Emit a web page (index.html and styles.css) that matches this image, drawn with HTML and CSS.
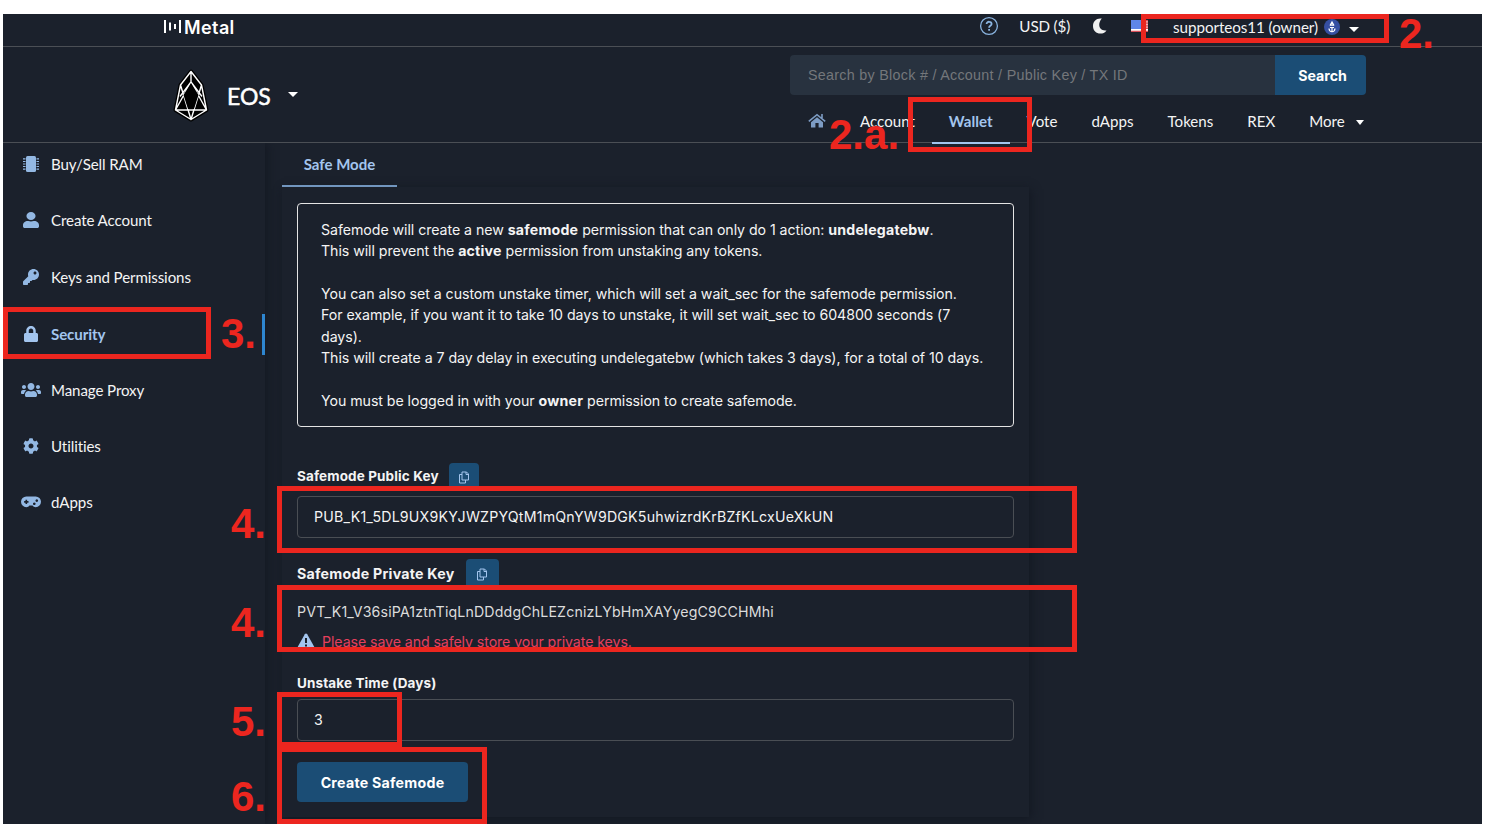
FILE: index.html
```html
<!DOCTYPE html>
<html lang="en">
<head>
    <meta charset="UTF-8">
    <meta name="viewport" content="width=device-width, initial-scale=1.0">
    <title>EOS Wallet - Safe Mode</title>
    <link rel="stylesheet" href="styles.css">
</head>
<body>
    <div class="app">
        <div class="topbar">
            <div class="brand">
                <svg width="20" height="16" viewBox="0 0 20 16" fill="#fff">
                    <rect x="1" y="1" width="2" height="13"/>
                    <rect x="6" y="3.5" width="2" height="8"/>
                    <rect x="11" y="5" width="2" height="5"/>
                    <rect x="16" y="1" width="2" height="13"/>
                </svg>
                <span>Metal</span>
            </div>
            <div class="top-links">
                <svg class="help" width="20" height="20" viewBox="0 0 20 20" fill="none" stroke="#8ab4e0" stroke-width="1.3">
                    <circle cx="10" cy="10" r="8.4"/>
                    <path stroke-width="1.8" d="M7.6 8.1c0-3.2 5-3 5 0 0 1.7-2.5 1.8-2.5 3.6M10.1 13v1.8"/>
                </svg>
                <span class="currency">USD ($)</span>
                <svg class="moon" width="16" height="16" viewBox="0 0 16 16" fill="#f1f1f1">
                    <path d="M9.800.6C4.500-.2 1 3.500 1 8c0 4.600 3.300 7.600 7.300 7.600 2.500 0 4.700-1 6.200-3.200C7.500 13.500 4.800 6.500 9.800.6z"/>
                </svg>
                <svg class="flag" width="17" height="12" viewBox="0 0 17 12">
                    <rect width="17" height="12" fill="#f3b3b3"/>
                    <path stroke="#d9505a" stroke-width="1.2" d="M0 .6h17M0 3.200h17M0 5.800h17M0 8.400h17M0 11.300h17"/>
                    <rect width="11" height="9" fill="#5f86e8"/>
                    <rect y="9" width="17" height="1.500" fill="#fff"/>
                </svg>
                <span class="user">supporteos11 (owner)</span>
                <svg class="anchor" width="16" height="16" viewBox="0 0 16 16" fill="none" stroke="#fff" stroke-width="1.2">
                    <circle cx="8" cy="8" r="8" fill="#3650a2" stroke="none"/>
                    <path d="M6 6.600L8 3l2 3.600M6.300 6.200h3.400M8 8v5M5 9.500c.4 4.300 5.600 4.300 6 0M6 8.500h4"/>
                </svg>
                <span class="caret caret-user"></span>
            </div>
        </div>

        <div class="header">
            <div class="chain">
                <svg width="36" height="54" viewBox="0 0 36 54" stroke-linejoin="round">
                    <path d="M18 2.500L7.500 16 2.500 41 18 50.500 33.500 41 28.500 16z" fill="#000" stroke="#000" stroke-width="4"/>
                    <path d="M18 2.500L7.500 16 2.500 41 18 50.500 33.500 41 28.500 16zM18 2.500v10.500M18 13L7 27.500M18 13l11 14.500M7.500 16L18 50.500 28.500 16M18 13L2.500 41h31L18 13" fill="none" stroke="#fff" stroke-width="1.4"/>
                    <path d="M18 14L10.500 26 15 40h6l4.500-14z" fill="#000"/>
                </svg>
                <span class="chain-name">EOS</span>
                <span class="caret"></span>
            </div>
            <div class="header-right">
                <div class="search">
                    <div class="search-input">Search by Block # / Account / Public Key / TX ID</div>
                    <button class="search-btn">Search</button>
                </div>
                <div class="nav">
                    <a class="home">
                        <svg width="18" height="16" viewBox="0 0 18 16">
                            <path d="M9 4.200l6 5V14.500h-4.400V10H7.400v4.500H3V9.200z" fill="#7d9cc4"/>
                            <path d="M.8 8.400L9 1.700l8.200 6.700M14 1v4" fill="none" stroke="#7d9cc4" stroke-width="1.6"/>
                        </svg>
                    </a>
                    <a>Account</a>
                    <a class="active">Wallet</a>
                    <a>Vote</a>
                    <a>dApps</a>
                    <a>Tokens</a>
                    <a>REX</a>
                    <a class="more">More <span class="caret"></span></a>
                </div>
            </div>
        </div>

        <div class="main">
            <div class="sidebar">
                <a>
                    <svg viewBox="0 0 512 512"><path d="M144 0h224q48 0 48 48v416q0 48-48 48H144q-48 0-48-48V48Q96 0 144 0z"/><path d="M0 92h80M0 174h80M0 256h80M0 338h80M0 420h80M432 92h80M432 174h80M432 256h80M432 338h80M432 420h80" stroke="#93b8e3" stroke-width="34"/></svg>
                    <span>Buy/Sell RAM</span>
                </a>
                <a>
                    <svg viewBox="0 0 448 512" preserveAspectRatio="none" class="person"><path d="M224 256c70.700 0 128-57.300 128-128S294.700 0 224 0 96 57.300 96 128s57.300 128 128 128zm89.600 32h-16.700c-22.200 10.200-46.900 16-72.900 16s-50.600-5.800-72.900-16h-16.700C60.200 288 0 348.200 0 422.400V464c0 26.500 21.500 48 48 48h352c26.500 0 48-21.500 48-48v-41.600c0-74.200-60.200-134.400-134.400-134.400z"/></svg>
                    <span>Create Account</span>
                </a>
                <a>
                    <svg viewBox="0 0 512 512"><path d="M512 176c0 97.200-78.800 176-176 176-11.200 0-22.200-1.100-32.800-3.100l-24 27A24 24 0 0 1 261.200 384H224v40c0 13.300-10.700 24-24 24h-40v40c0 13.300-10.700 24-24 24H24c-13.300 0-24-10.700-24-24v-78.100c0-6.400 2.500-12.500 7-17l161.800-161.800C163.100 213.800 160 195.300 160 176 160 78.800 238.800 0 336 0c97.500 0 176 78.500 176 176zM336 128c0 26.500 21.500 48 48 48s48-21.500 48-48-21.500-48-48-48-48 21.500-48 48z"/></svg>
                    <span>Keys and Permissions</span>
                </a>
                <a class="active">
                    <svg viewBox="0 0 448 512"><path d="M400 224h-24v-72C376 68.200 307.800 0 224 0S72 68.200 72 152v72H48c-26.500 0-48 21.500-48 48v192c0 26.500 21.500 48 48 48h352c26.500 0 48-21.500 48-48V272c0-26.500-21.500-48-48-48zm-104 0H152v-72c0-39.700 32.300-72 72-72s72 32.300 72 72v72z"/></svg>
                    <span>Security</span>
                </a>
                <a>
                    <svg viewBox="0 0 640 512"><path d="M96 224c35.300 0 64-28.700 64-64s-28.700-64-64-64-64 28.700-64 64 28.700 64 64 64zm448 0c35.300 0 64-28.700 64-64s-28.700-64-64-64-64 28.700-64 64 28.700 64 64 64zm32 32h-64c-17.600 0-33.500 7.100-45.100 18.600 40.300 22.100 68.900 62 75.100 109.400h66c17.700 0 32-14.300 32-32v-32c0-35.300-28.700-64-64-64zm-256 0c61.900 0 112-50.100 112-112S381.900 32 320 32 208 82.100 208 144s50.100 112 112 112zm76.800 32h-8.300c-20.800 10-43.900 16-68.500 16s-47.600-6-68.500-16h-8.300C179.600 288 128 339.600 128 403.200V432c0 26.500 21.500 48 48 48h288c26.500 0 48-21.500 48-48v-28.800c0-63.600-51.600-115.200-115.200-115.200zm-223.700-13.400C161.500 263.100 145.600 256 128 256H64c-35.300 0-64 28.700-64 64v32c0 17.700 14.300 32 32 32h65.900c6.300-47.400 34.900-87.300 75.200-109.400z"/></svg>
                    <span>Manage Proxy</span>
                </a>
                <a>
                    <svg viewBox="0 0 512 512"><path d="M487.400 315.700l-42.600-24.600c4.300-23.200 4.300-47 0-70.200l42.600-24.600c4.900-2.800 7.100-8.600 5.500-14-11.100-35.600-30-67.800-54.700-94.600-3.800-4.100-10-5.100-14.800-2.300L380.800 110c-17.900-15.400-38.500-27.300-60.800-35.100V25.800c0-5.600-3.900-10.500-9.400-11.700-36.700-8.200-74.300-7.800-109.200 0-5.500 1.200-9.400 6.100-9.400 11.700V75c-22.200 7.900-42.800 19.800-60.800 35.100L88.700 85.500c-4.900-2.800-11-1.900-14.800 2.300-24.700 26.700-43.600 58.900-54.700 94.600-1.700 5.400.6 11.200 5.500 14L67.300 221c-4.300 23.200-4.300 47 0 70.200l-42.600 24.600c-4.900 2.800-7.100 8.600-5.500 14 11.100 35.600 30 67.800 54.700 94.600 3.800 4.100 10 5.100 14.800 2.300l42.600-24.600c17.900 15.400 38.500 27.300 60.800 35.100v49.200c0 5.600 3.900 10.500 9.400 11.700 36.700 8.200 74.300 7.800 109.200 0 5.500-1.200 9.400-6.100 9.400-11.700v-49.200c22.200-7.900 42.800-19.800 60.800-35.100l42.600 24.600c4.900 2.800 11 1.900 14.800-2.300 24.700-26.700 43.600-58.900 54.700-94.600 1.500-5.500-.7-11.300-5.600-14.100zM256 336c-44.100 0-80-35.900-80-80s35.900-80 80-80 80 35.900 80 80-35.900 80-80 80z"/></svg>
                    <span>Utilities</span>
                </a>
                <a>
                    <svg viewBox="0 0 640 512"><path fill-rule="evenodd" d="M170 80h300a170 170 0 0 1 0 340c-45 0-75-20-100-52H270c-25 32-55 52-100 52a170 170 0 0 1 0-340zm-26 100v44h-44v52h44v44h52v-44h44v-52h-44v-44zM425 270a42 42 0 1 0 .1 0zm80-100a42 42 0 1 0 .1 0z"/></svg>
                    <span>dApps</span>
                </a>
            </div>

            <div class="content">
                <div class="tabs"><a class="tab">Safe Mode</a></div>
                <div class="card">
                    <div class="info">
                        Safemode will create a new <b>safemode</b> permission that can only do 1 action: <b>undelegatebw</b>.<br>
                        This will prevent the <b>active</b> permission from unstaking any tokens.<br>
                        <br>
                        You can also set a custom unstake timer, which will set a wait_sec for the safemode permission.<br>
                        For example, if you want it to take 10 days to unstake, it will set wait_sec to 604800 seconds (7<br>
                        days).<br>
                        This will create a 7 day delay in executing undelegatebw (which takes 3 days), for a total of 10 days.<br>
                        <br>
                        You must be logged in with your <b>owner</b> permission to create safemode.
                    </div>

                    <div class="label public">
                        <span>Safemode Public Key</span>
                        <button class="copy">
                            <svg width="12" height="13" viewBox="0 0 12 13"><path d="M4 1h4.500l2 2v6H4zM8 1v2.500h2.500M4 3.500H1.500V12h6V9"/></svg>
                        </button>
                    </div>
                    <div class="field">PUB_K1_5DL9UX9KYJWZPYQtM1mQnYW9DGK5uhwizrdKrBZfKLcxUeXkUN</div>

                    <div class="label private">
                        <span>Safemode Private Key</span>
                        <button class="copy">
                            <svg width="12" height="13" viewBox="0 0 12 13"><path d="M4 1h4.500l2 2v6H4zM8 1v2.500h2.500M4 3.500H1.500V12h6V9"/></svg>
                        </button>
                    </div>
                    <div class="private-key">PVT_K1_V36siPA1ztnTiqLnDDddgChLEZcnizLYbHmXAYyegC9CCHMhi</div>
                    <div class="warning">
                        <svg width="18" height="16" viewBox="0 0 18 16">
                            <path d="M9 .5q.8 0 1.200.7l7 12.500q.7 1.800-1.200 1.800H2q-1.900 0-1.200-1.800l7-12.500Q8.200.5 9 .5z" fill="#a3c5ee"/>
                            <path d="M9 5v5M9 11.500v2" stroke="#1b212c" stroke-width="2"/>
                        </svg>
                        <span>Please save and safely store your private keys.</span>
                    </div>

                    <div class="label unstake"><span>Unstake Time (Days)</span></div>
                    <div class="field">3</div>
                    <button class="create">Create Safemode</button>
                </div>
            </div>
        </div>
    </div>

    <!-- step markers drawn over the page -->
    <div class="mark mark-account"></div>
    <div class="mark mark-wallet"></div>
    <div class="mark mark-security"></div>
    <div class="mark mark-public"></div>
    <div class="mark mark-private"></div>
    <div class="mark mark-days"></div>
    <div class="mark mark-create"></div>
    <span class="step step-account">2.</span>
    <span class="step step-wallet">2.a.</span>
    <span class="step step-security">3.</span>
    <span class="step step-public">4.</span>
    <span class="step step-private">4.</span>
    <span class="step step-days">5.</span>
    <span class="step step-create">6.</span>
</body>
</html>
```

FILE: styles.css
```css
* {
    margin: 0;
    padding: 0;
    box-sizing: border-box;
}

body {
    width: 1490px;
    height: 832px;
    padding: 14px 8px 8px 3px;
    background: #fff;
    overflow: hidden;
    position: relative;
    font-family: Lato, sans-serif;
    color: #f4f4f4;
}

button {
    border: none;
    color: #fff;
    background: #1b4d75;
    font-family: Inter, sans-serif;
    font-weight: 700;
}

.app {
    height: 810px;
    background: #1b212c;
    overflow: hidden;
}

.caret {
    display: inline-block;
    border: 4.5px solid transparent;
    border-top: 5px solid #fff;
    border-bottom: none;
}

/* top bar */
.topbar {
    height: 33px;
    display: flex;
    justify-content: space-between;
    padding: 0 123px 0 160px;
    border-bottom: 1px solid #4b4f55;
}

.brand {
    display: flex;
    align-items: center;
    height: 26px;
    font-family: Inter, sans-serif;
    font-size: 18px;
    font-weight: 600;
    letter-spacing: 0.4px;
    color: #fff;
}

.brand svg {
    margin-right: 1px;
}

.top-links {
    display: flex;
    align-items: center;
    height: 24px;
    font-size: 15.2px;
}

.currency {
    margin: 0 22px 0 20px;
    letter-spacing: -0.15px;
}

.flag {
    margin-left: 23px;
}

.user {
    margin-left: 25px;
    padding-top: 2px;
    letter-spacing: -0.06px;
}

.anchor {
    margin: 2px 9px 0 6px;
}

.caret-user {
    margin-top: 6px;
    border-width: 5px 5px 0;
}

/* header */
.header {
    height: 96px;
    display: flex;
    justify-content: space-between;
    padding: 8px 116px 0 170px;
    border-bottom: 1px solid #4b4f55;
}

.chain {
    display: flex;
    align-items: center;
    height: 82px;
}

.chain-name {
    margin: 0 17px 0 18px;
    font-size: 23px;
    color: #fff;
    -webkit-text-stroke: 0.5px #fff;
}

.chain .caret {
    margin-top: -3px;
    border-width: 5px 5px 0;
}

.header-right {
    width: 576px;
}

.search {
    display: flex;
    height: 40px;
    border-radius: 4px;
    overflow: hidden;
}

.search-input {
    flex: 1;
    padding-left: 18px;
    line-height: 41px;
    background: #28323f;
    color: #74777b;
    font-family: "Liberation Sans", sans-serif;
    font-size: 14.3px;
    letter-spacing: 0.29px;
}

.search-btn {
    width: 91px;
    padding-left: 4px;
    font-size: 14.2px;
}

.nav {
    display: flex;
    height: 49px;
}

.nav a {
    padding: 15px 17px 0;
    font-size: 15.1px;
    line-height: 22px;
    white-space: nowrap;
}

.nav .home {
    padding-left: 18px;
}

.nav .home svg {
    display: block;
    margin-top: 3px;
}

.nav .active {
    color: #a3c5ee;
    font-weight: 700;
    border-bottom: 2px solid #a3c5ee;
}

.nav .more {
    padding-right: 0;
}

.nav .caret {
    margin: 0 0 2px 7px;
}

/* page body */
.main {
    display: flex;
}

.sidebar {
    width: 262px;
    height: 681px;
    padding-top: 2px;
    box-shadow: 2px 0 9px #131822;
    clip-path: inset(0 -20px 0 0);
}

.sidebar a {
    display: flex;
    align-items: center;
    height: 40px;
    margin-bottom: 16.4px;
    padding-left: 18px;
    font-size: 15.1px;
    letter-spacing: -0.1px;
}

.sidebar span {
    margin-top: -2px;
}

.sidebar svg {
    width: 20px;
    height: 16px;
    margin: -2px 10px 0 0;
    fill: #93b8e3;
}

.sidebar .person {
    width: 16px;
    margin: -2px 12px 0 2px;
}

.sidebar .active {
    height: 41px;
    margin-bottom: 15.4px;
    color: #a3c5ee;
    font-weight: 700;
    border-right: 3px solid #2e86d0;
}

.sidebar .active svg {
    fill: #a3c5ee;
}

.content {
    margin-left: 17px;
    width: 747px;
}

.tabs {
    height: 44px;
    display: flex;
}

.tab {
    width: 115px;
    line-height: 42px;
    height: 44px;
    text-align: center;
    color: #a3c5ee;
    font-size: 15px;
    font-weight: 700;
    border-bottom: 2px solid #7296bf;
}

.card {
    height: 630px;
    padding: 16px 15px;
    box-shadow: 2px 2px 9px #131822;
    font-family: Inter, sans-serif;
    font-size: 14.2px;
}

.info {
    height: 224px;
    padding: 15px 23px;
    border: 1px solid #e4e4e4;
    border-radius: 4px;
    line-height: 21.33px;
    letter-spacing: -0.06px;
    white-space: nowrap;
}

.info b {
    letter-spacing: 0.2px;
}

.label {
    display: flex;
    font-size: 13.5px;
    font-weight: 700;
    letter-spacing: 0.12px;
}

.label span {
    line-height: 27px;
}

.public {
    height: 33px;
    margin-top: 36px;
}

.private {
    height: 42px;
    margin-top: 21px;
    font-size: 14.2px;
    letter-spacing: 0.25px;
}

.private span {
    line-height: 29px;
}

.copy {
    width: 30px;
    height: 28px;
    margin-left: 10px;
    border-radius: 4px;
}

.private .copy {
    width: 33px;
    height: 30px;
    margin-left: 11px;
}

.copy svg {
    display: block;
    margin: 0 auto;
    fill: none;
    stroke: #a3c5ee;
    stroke-width: 1;
}

.field {
    height: 42px;
    padding-left: 16px;
    line-height: 40px;
    border: 1px solid #4a4e54;
    border-radius: 4px;
    letter-spacing: 0.2px;
}

.private-key {
    line-height: 22px;
    color: #dcdcdc;
    letter-spacing: 0.14px;
}

.warning {
    display: flex;
    align-items: center;
    height: 22px;
    margin-top: 7px;
    color: #e63f5c;
    letter-spacing: -0.09px;
}

.warning svg {
    margin-right: 7px;
}

.unstake {
    height: 29px;
    margin-top: 18px;
}

.create {
    display: block;
    width: 171px;
    height: 40px;
    margin-top: 21px;
    border-radius: 4px;
    font-size: 14.2px;
    letter-spacing: 0.25px;
}

/* step markers */
.mark {
    position: absolute;
    border: 5px solid #ec261f;
}

.mark-account { left: 1141px; top: 14px; width: 248px; height: 29px; }
.mark-wallet { left: 908px; top: 97px; width: 124px; height: 55px; }
.mark-security { left: 3px; top: 307px; width: 208px; height: 52px; }
.mark-public { left: 277px; top: 486px; width: 800px; height: 67px; }
.mark-private { left: 277px; top: 585px; width: 800px; height: 67px; }
.mark-days { left: 277px; top: 692px; width: 125px; height: 55px; }
.mark-create { left: 277px; top: 747px; width: 210px; height: 77px; }

.step {
    position: absolute;
    color: #ec261f;
    font-family: "Liberation Sans", sans-serif;
    font-size: 42px;
    font-weight: 700;
    line-height: 48px;
}

.step-account { left: 1399px; top: 10px; }
.step-wallet { left: 829px; top: 111px; }
.step-security { left: 221px; top: 310px; }
.step-public { left: 231px; top: 500px; }
.step-private { left: 231px; top: 599px; }
.step-days { left: 231px; top: 698px; }
.step-create { left: 231px; top: 773px; }
```
